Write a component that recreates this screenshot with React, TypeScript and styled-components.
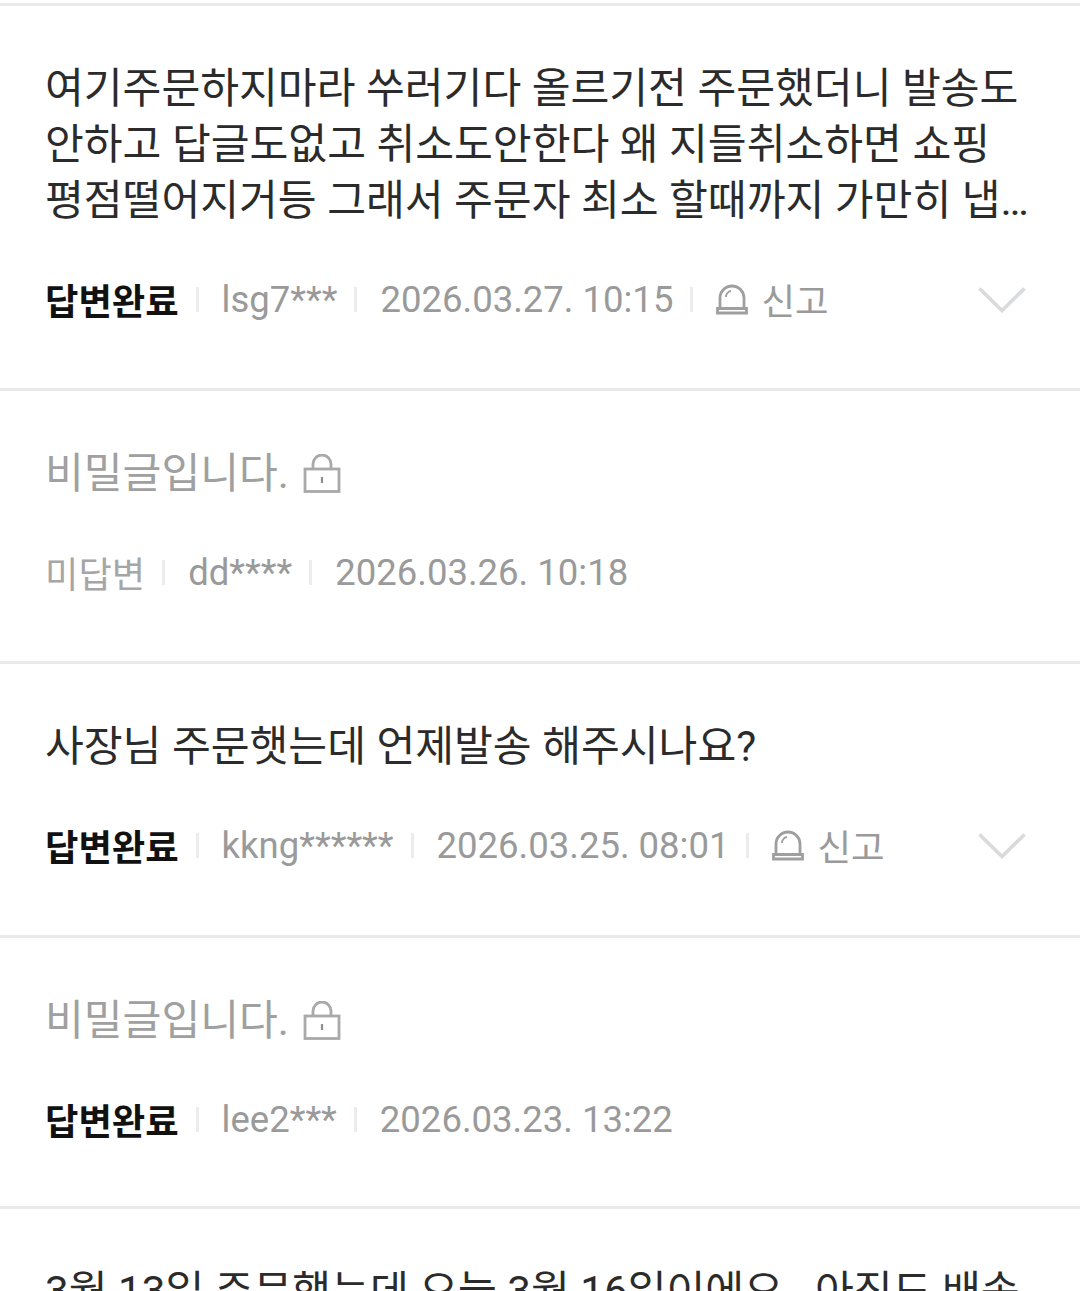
import React from "react";
import styled, { createGlobalStyle } from "styled-components";

const GlobalStyle = createGlobalStyle`
  html, body {
    margin: 0;
    padding: 0;
    background: #fff;
    height: 1291px;
    overflow: hidden;
  }
`;

const List = styled.div`
  width: 1080px;
  height: 1291px;
  overflow: hidden;
  padding-top: 3px;
  box-sizing: border-box;
  font-family: Roboto, "Noto Sans CJK KR", sans-serif;
`;

const Item = styled.div`
  border-top: 3px solid #e9e9e9;
  padding: 55px 54px 0 45px;
  box-sizing: border-box;
  height: ${({ $h }: { $h: number }) => $h}px;
`;

const Body = styled.div<{ $secret?: boolean }>`
  font-size: 42.2px;
  line-height: 56px;
  color: ${({ $secret }) => ($secret ? "#a0a0a0" : "#2b2b2b")};
  display: flex;
  align-items: center;
  gap: 14px;
`;

const Clamp = styled.div`
  width: 986px;
  font-size: 42.2px;
  line-height: 56px;
  color: #2b2b2b;
  display: -webkit-box;
  -webkit-box-orient: vertical;
  -webkit-line-clamp: 3;
  overflow: hidden;
`;

const Meta = styled.div`
  display: flex;
  align-items: center;
  height: 44px;
  margin-top: 48px;
  font-size: 36.5px;
  color: #9a9a9a;
`;

const Status = styled.span<{ $done?: boolean }>`
  font-weight: ${({ $done }) => ($done ? 700 : 400)};
  color: ${({ $done }) => ($done ? "#111" : "#a6a6a6")};
  font-size: 36.3px;
`;

const Sep = styled.i`
  width: 3px;
  height: 25px;
  background: #ececec;
  margin: 0 23px 0 17px;
`;

const Report = styled.span`
  display: flex;
  align-items: center;
  gap: 13px;
`;

const Chevron = styled.svg`
  margin-left: auto;
  margin-top: 2px;
  flex: none;
`;

const LockIcon = () => (
  <svg width="38" height="40" viewBox="0 0 38 40" fill="none" stroke="#a9a9a9" strokeWidth="2.8">
    <rect x="2" y="15" width="34" height="22.5" />
    <path d="M10 15V10a9 9 0 0 1 18 0v5" />
    <path d="M19 23v6" strokeWidth="2.2" stroke="#8f8f8f" />
  </svg>
);

const SirenIcon = () => (
  <svg width="32" height="32" viewBox="0 0 32 32" fill="none" stroke="#9f9f9f" strokeWidth="2.8">
    <path d="M4 25V15a12 12 0 0 1 24 0v10" />
    <path d="M1.5 25.5h29v4.5h-29z" />
    <path d="M10 14a6 6 0 0 1 5-6" strokeWidth="1.8" />
  </svg>
);

const DownIcon = () => (
  <Chevron width="48" height="26" viewBox="0 0 48 26" fill="none" stroke="#d9dadc" strokeWidth="3.6">
    <path d="M1.5 1.5L24 23.5L46.5 1.5" />
  </Chevron>
);

type Row = {
  h: number;
  text?: string;
  secret?: boolean;
  done: boolean;
  user: string;
  date: string;
  report?: boolean;
};

const rows: Row[] = [
  {
    h: 385,
    text: "여기주문하지마라 쑤러기다 올르기전 주문했더니 발송도 안하고 답글도없고 취소도안한다 왜 지들취소하면 쇼핑 평점떨어지거등 그래서 주문자 최소 할때까지 가만히 냅둔다 이런곳은 진짜 주문하면 안된다",
    done: true,
    user: "lsg7***",
    date: "2026.03.27. 10:15",
    report: true,
  },
  { h: 273, secret: true, done: false, user: "dd****", date: "2026.03.26. 10:18" },
  {
    h: 274,
    text: "사장님 주문햇는데 언제발송 해주시나요?",
    done: true,
    user: "kkng******",
    date: "2026.03.25. 08:01",
    report: true,
  },
  { h: 271, secret: true, done: true, user: "lee2***", date: "2026.03.23. 13:22" },
  { h: 90, text: "3월 13일 주문했는데 오늘 3월 16일이에요.\u00a0 아직도 배송", done: true, user: "", date: "" },
];

export default function App() {
  return (
    <>
      <GlobalStyle />
      <List>
        {rows.map((r, i) => (
          <Item key={i} $h={r.h}>
            {r.secret ? (
              <Body $secret>
                비밀글입니다. <LockIcon />
              </Body>
            ) : i === 0 ? (
              <Clamp>{r.text}</Clamp>
            ) : (
              <Body>{r.text}</Body>
            )}
            {r.user && (
              <Meta>
                <Status $done={r.done}>{r.done ? "답변완료" : "미답변"}</Status>
                <Sep />
                <span>{r.user}</span>
                <Sep />
                <span>{r.date}</span>
                {r.report && (
                  <>
                    <Sep />
                    <Report>
                      <SirenIcon />
                      신고
                    </Report>
                    <DownIcon />
                  </>
                )}
              </Meta>
            )}
          </Item>
        ))}
      </List>
    </>
  );
}
